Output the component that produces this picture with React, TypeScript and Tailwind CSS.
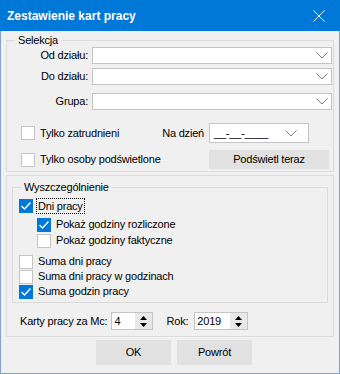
import { ReactNode } from 'react';

function Check({ checked }: { checked?: boolean }) {
  if (checked) {
    return (
      <span className="w-[14px] h-[14px] bg-[#0078d7] shrink-0 flex">
        <svg width="14" height="14" viewBox="0 0 14 14">
          <path d="M2.5 7 L5.5 10 L11.5 3.5" fill="none" stroke="#fff" strokeWidth="1.4" />
        </svg>
      </span>
    );
  }
  return <span className="w-[14px] h-[14px] bg-white border border-[#c4c4c4] shrink-0" />;
}

function Chevron() {
  return (
    <svg width="12" height="7" viewBox="0 0 12 7" className="shrink-0">
      <path d="M0.5 0.5 L6 6 L11.5 0.5" fill="none" stroke="#7a7a7a" strokeWidth="1" />
    </svg>
  );
}

function Combo({ label }: { label: string }) {
  return (
    <div className="flex items-center">
      <span className="w-[81px] text-right">{label}</span>
      <div className="ml-[4px] flex-1 h-full bg-white border border-[#c4c4c4] flex items-center justify-end pr-[3px]">
        <Chevron />
      </div>
    </div>
  );
}

function Spin({ value, width }: { value: string; width: string }) {
  return (
    <div className={`${width} h-[18px] bg-white border border-[#c4c4c4] flex items-stretch`}>
      <span className="flex-1 pl-[2px] leading-[16px]">{value}</span>
      <div className="w-[17px] bg-[#e8e8e8] flex flex-col items-center justify-center gap-[3px]">
        <svg width="7" height="4" viewBox="0 0 7 4">
          <path d="M0 4 L3.5 0 L7 4 Z" fill="#000" />
        </svg>
        <svg width="7" height="4" viewBox="0 0 7 4">
          <path d="M0 0 L3.5 4 L7 0 Z" fill="#000" />
        </svg>
      </div>
    </div>
  );
}

function Option({
  checked,
  indent,
  children
}: {
  checked?: boolean;
  indent: string;
  children: ReactNode;
}) {
  return (
    <div className={`flex items-center h-[15px] ${indent}`}>
      <Check checked={checked} />
      <span className="ml-[5px] leading-[15px]">{children}</span>
    </div>
  );
}

export default function App() {
  return (
    <div className="w-[340px] h-[374px] flex flex-col bg-[#f0f0f0] text-[11px] tracking-[-0.2px] text-black font-['Liberation_Sans',Arial,sans-serif]">
      <div className="h-[31px] shrink-0 bg-[#0078d7] flex items-center justify-between pl-[7px] pr-[15px]">
        <span className="text-white font-bold text-[12px] tracking-normal">Zestawienie kart pracy</span>
        <svg width="12" height="12" viewBox="0 0 12 12">
          <path d="M0.5 0.5 L11.5 11.5 M11.5 0.5 L0.5 11.5" stroke="#fff" strokeWidth="1" />
        </svg>
      </div>

      <div className="flex-1 flex flex-col border-x border-b border-[#7fa2cf] px-[5px]">
        {/* Selekcja */}
        <fieldset className="mt-[3px] min-w-0 border border-[#dcdcdc] pr-[1px] pb-[2px] flex flex-col">
          <legend className="ml-[8px] px-[3px] leading-[12px]">Selekcja</legend>
          <div className="mt-[1px] h-[19px] flex flex-col">
            <Combo label="Od działu:" />
          </div>
          <div className="mt-[2px] h-[19px] flex flex-col">
            <Combo label="Do działu:" />
          </div>
          <div className="mt-[6px] h-[20px] flex flex-col">
            <Combo label="Grupa:" />
          </div>

          <div className="mt-[10px] h-[20px] flex items-center">
            <div className="w-[202px] flex items-center justify-between pl-[14px] pr-[5px]">
              <div className="flex items-center">
                <Check />
                <span className="ml-[5px]">Tylko zatrudnieni</span>
              </div>
              <span>Na dzień</span>
            </div>
            <div className="w-[100px] h-full bg-white border border-[#c4c4c4] flex items-center justify-between pl-[4px] pr-[11px]">
              <span>__-__-____</span>
              <Chevron />
            </div>
          </div>

          <div className="mt-[7px] h-[19px] flex items-center">
            <div className="w-[202px] flex items-center pl-[14px]">
              <Check />
              <span className="ml-[5px]">Tylko osoby podświetlone</span>
            </div>
            <button className="w-[120px] h-full bg-[#e1e1e1] flex items-center justify-center">
              Podświetl teraz
            </button>
          </div>
        </fieldset>

        {/* Wyszczególnienie + miesiąc */}
        <div className="mt-[3px] border border-[#dcdcdc] px-[5px] pt-[5px] pb-[6px] flex flex-col">
          <fieldset className="min-w-0 border border-[#dcdcdc] pb-[3px] flex flex-col">
            <legend className="ml-[8px] px-[3px] leading-[12px]">Wyszczególnienie</legend>
            <div className="mt-[5px] h-[16px] flex items-center pl-[6px]">
              <Check checked />
              <span className="ml-[3px] px-[1px] border border-dotted border-black leading-[14px]">
                Dni pracy
              </span>
            </div>
            <div className="mt-[3px]">
              <Option checked indent="pl-[24px]">Pokaż godziny rozliczone</Option>
            </div>
            <div className="mt-[1px]">
              <Option indent="pl-[24px]">Pokaż godziny faktyczne</Option>
            </div>
            <div className="mt-[6px]">
              <Option indent="pl-[6px]">Suma dni pracy</Option>
            </div>
            <Option indent="pl-[6px]">Suma dni pracy w godzinach</Option>
            <Option checked indent="pl-[6px]">Suma godzin pracy</Option>
          </fieldset>

          <div className="mt-[9px] flex items-center pl-[8px]">
            <span>Karty pracy za Mc:</span>
            <div className="ml-[4px]">
              <Spin value="4" width="w-[42px]" />
            </div>
            <span className="ml-[13px]">Rok:</span>
            <div className="ml-[6px]">
              <Spin value="2019" width="w-[54px]" />
            </div>
          </div>
        </div>

        <div className="mt-[3px] flex gap-[6px] pl-[90px]">
          <button className="w-[75px] h-[25px] bg-[#e1e1e1]">OK</button>
          <button className="w-[75px] h-[25px] bg-[#e1e1e1]">Powrót</button>
        </div>
      </div>
    </div>
  );
}
